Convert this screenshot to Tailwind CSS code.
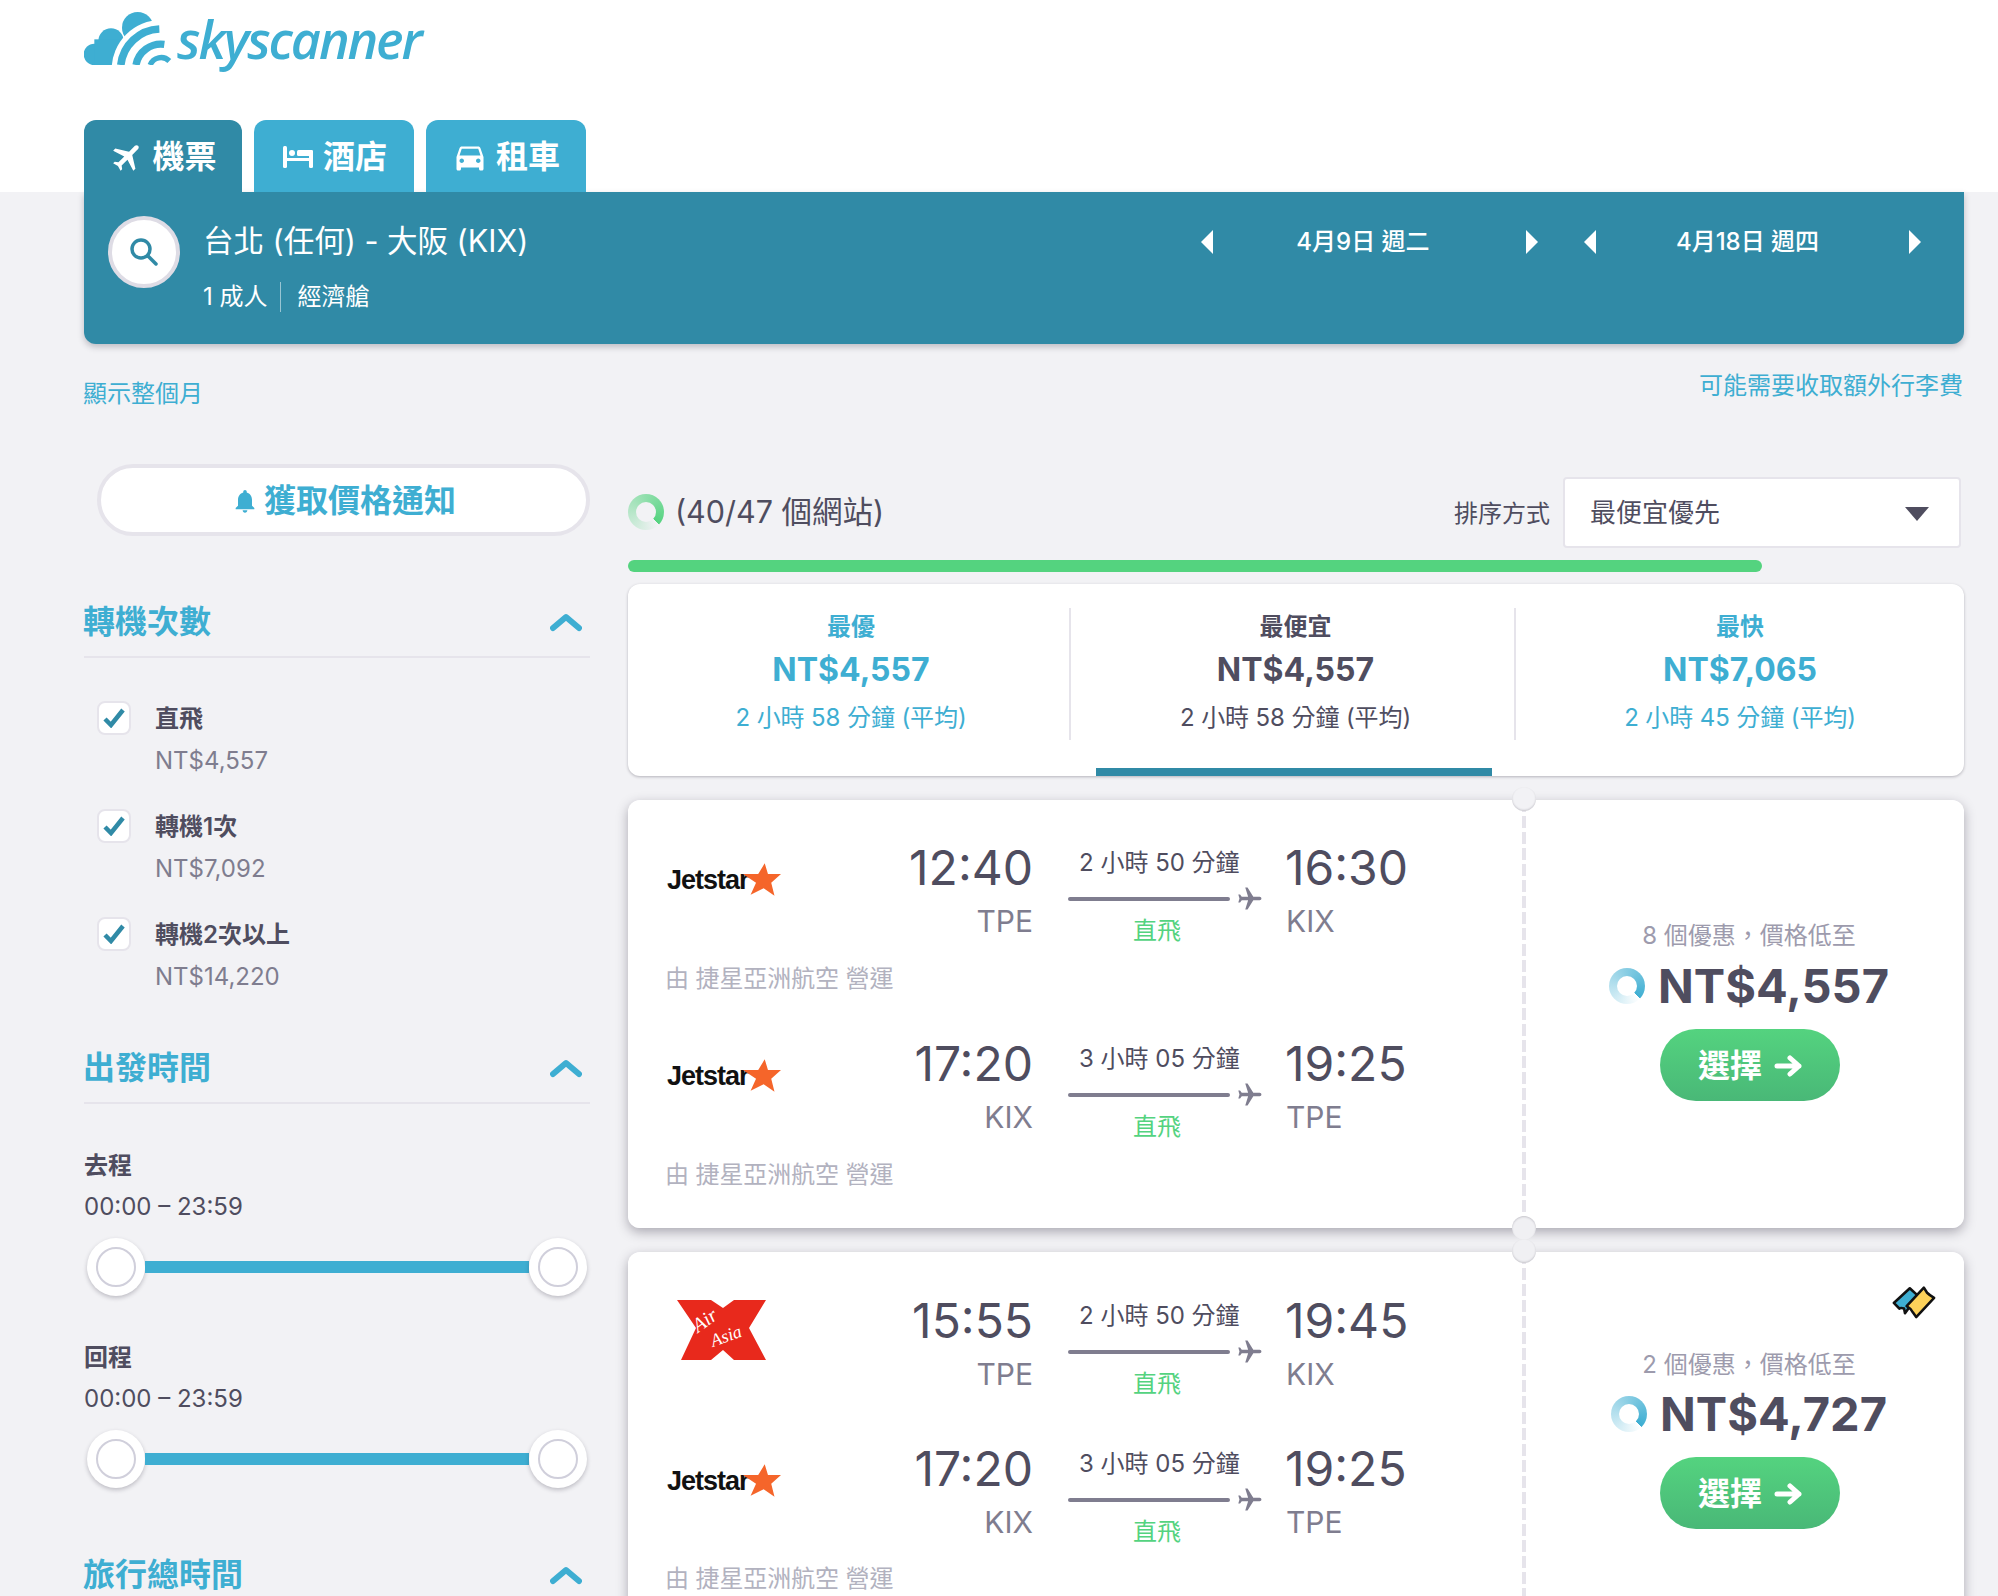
<!DOCTYPE html>
<html lang="zh-Hant">
<head>
<meta charset="UTF-8">
<title>Skyscanner</title>
<script src="https://cdn.jsdelivr.net/npm/@tailwindcss/browser@4"></script>
</head>
<body class="w-[1998px] h-[1596px] overflow-hidden bg-[#f2f2f5] text-[#4f4d5f] font-['Inter','Noto_Sans_CJK_TC',sans-serif]">

<!-- header -->
<header class="bg-white h-[192px] px-[84px]">
  <div class="h-[120px] pt-[11px] flex items-start gap-[3px]">
    <svg width="90" height="54" viewBox="24 15 270 162">
      <g fill="#3eaed2">
        <circle cx="55" cy="145" r="32"/><circle cx="105" cy="105" r="38"/><circle cx="185" cy="65" r="47"/>
        <rect x="55" y="100" width="130" height="77"/>
      </g>
      <circle cx="255" cy="190" r="148" fill="#fff"/>
      <g fill="none" stroke="#3eaed2">
        <path stroke-width="23" d="M134.5 177A121 121 0 0 1 250 69"/>
        <path stroke-width="22" d="M180 177A76 76 0 0 1 265 115"/>
        <path stroke-width="16" d="M222.5 177A35 35 0 0 1 280 165"/>
      </g>
    </svg>
    <span class="text-[#3eaed2] text-[52px] leading-[56px] italic font-semibold font-['Open_Sans',sans-serif] tracking-[-2.1px]">skyscanner</span>
  </div>
  <nav class="flex gap-[12px] h-[72px] text-white text-[32px] font-bold">
    <div class="w-[158px] pt-[2px] pl-[1px] rounded-t-[12px] bg-[#308aa6] flex items-center justify-center gap-[6px]">
      <svg class="w-[36px] h-[36px] rotate-45" viewBox="0 0 24 24" fill="#fff"><path d="M21 16v-2l-8-5V3.5c0-.83-.67-1.5-1.5-1.5S10 2.67 10 3.5V9l-8 5v2l8-2.5V19l-2 1.500V22l3.500-1 3.500 1v-1.500L13 19v-5.500l8 2.500z"/></svg>
      <span>機票</span>
    </div>
    <div class="w-[160px] pt-[2px] pl-[2px] rounded-t-[12px] bg-[#3eaed2] flex items-center justify-center gap-[10px]">
      <svg class="w-[30px] h-[24px]" viewBox="0 0 30 24" fill="#fff"><rect x="0" y="1" width="4" height="22" rx="1.5"/><circle cx="9" cy="8" r="3"/><rect x="14" y="5" width="16" height="6" rx="1.5"/><rect x="3" y="13" width="27" height="3"/><rect x="26" y="5" width="4" height="18" rx="1.5"/></svg>
      <span>酒店</span>
    </div>
    <div class="w-[160px] pt-[2px] rounded-t-[12px] bg-[#3eaed2] flex items-center justify-center gap-[8px]">
      <svg class="w-[36px] h-[36px]" viewBox="0 0 24 24" fill="#fff"><path d="M18.92 6.01C18.72 5.42 18.16 5 17.5 5h-11c-.66 0-1.21.42-1.42 1.01L3 12v8c0 .55.45 1 1 1h1c.55 0 1-.45 1-1v-1h12v1c0 .55.45 1 1 1h1c.55 0 1-.45 1-1v-8l-2.08-5.99zM6.5 16c-.83 0-1.5-.67-1.5-1.5S5.67 13 6.5 13s1.5.67 1.5 1.5S7.33 16 6.5 16zm11 0c-.83 0-1.5-.67-1.5-1.5s.67-1.5 1.5-1.5 1.5.67 1.5 1.5-.67 1.5-1.5 1.5zM5 11l1.5-4.5h11L19 11H5z"/></svg>
      <span>租車</span>
    </div>
  </nav>
</header>

<!-- search summary -->
<section class="ml-[84px] w-[1880px] h-[152px] rounded-b-[12px] bg-[#308aa6] shadow-[0_3px_6px_rgba(37,32,51,0.25)] text-white flex pl-[24px] pt-[24px]">
  <div class="w-[72px] h-[72px] rounded-full bg-white border-4 border-[#dedce5] flex items-center justify-center">
    <svg class="w-[34px] h-[34px]" viewBox="0 0 34 34" fill="none" stroke="#308aa6" stroke-width="3.5" stroke-linecap="round"><circle cx="14" cy="14" r="9"/><path d="M21 21l8 8"/></svg>
  </div>
  <div class="ml-[23px] w-[997px]">
    <div class="text-[30.5px] leading-[44px] mt-[3px]">台北 (任何) - 大阪 (KIX)</div>
    <div class="flex items-center mt-[19px] text-[24px] leading-[30px]">
      <span>1 成人</span>
      <span class="w-[1px] h-[30px] bg-white/50 ml-[12px] mr-[17px]"></span>
      <span>經濟艙</span>
    </div>
  </div>
  <div class="flex items-start text-[24px] leading-[52px] font-medium">
    <div class="w-[339px] flex items-center justify-between">
      <svg width="14" height="24" viewBox="0 0 14 24" fill="#fff"><path d="M13 0v24L1 12z"/></svg>
      <span class="pr-[13px]">4月9日 週二</span>
      <svg width="14" height="24" viewBox="0 0 14 24" fill="#fff"><path d="M1 0v24l12-12z"/></svg>
    </div>
    <div class="w-[339px] ml-[44px] flex items-center justify-between">
      <svg width="14" height="24" viewBox="0 0 14 24" fill="#fff"><path d="M13 0v24L1 12z"/></svg>
      <span class="pr-[10px]">4月18日 週四</span>
      <svg width="14" height="24" viewBox="0 0 14 24" fill="#fff"><path d="M1 0v24l12-12z"/></svg>
    </div>
  </div>
</section>

<div class="flex justify-between pl-[83px] pr-[35px] text-[24px] leading-[32px] text-[#3eaed2] pt-[26px] h-[120px]">
  <a class="mt-[8px]">顯示整個月</a>
  <a>可能需要收取額外行李費</a>
</div>

<div class="flex pl-[84px]">
  <!-- filters -->
  <aside class="w-[506px] shrink-0">
    <button class="ml-[13px] w-[493px] h-[72px] pt-[2px] rounded-full bg-white border-4 border-[#e6e4eb] flex items-center justify-center gap-[5px] text-[#3eaed2] text-[32px] font-bold">
      <svg class="w-[28px] h-[28px]" viewBox="0 0 24 24" fill="#3eaed2"><path d="M12 22c1.1 0 2-.9 2-2h-4c0 1.1.9 2 2 2zm6-6v-5c0-3.07-1.63-5.64-4.5-6.32V4c0-.83-.67-1.5-1.5-1.5s-1.500.67-1.5 1.500v.68C7.640 5.360 6 7.920 6 11v5l-2 2v1h16v-1l-2-2z"/></svg>
      <span>獲取價格通知</span>
    </button>

    <div class="mt-[52px] h-[70px] border-b-2 border-[#e6e4eb] flex items-center justify-between text-[#3eaed2] text-[32px] font-bold">
      <span class="-ml-[1px]">轉機次數</span>
      <svg class="mr-[8px]" width="32" height="20" viewBox="0 0 32 20" fill="none" stroke="#3eaed2" stroke-width="6" stroke-linecap="round" stroke-linejoin="round"><path d="M3 16L16 5l13 11"/></svg>
    </div>

    <div class="mt-[43px] flex items-start h-[108px] pl-[13px]">
      <div class="w-[34px] h-[34px] rounded-[8px] bg-white border-2 border-[#e6e4eb] flex items-center justify-center">
        <svg width="22" height="20" viewBox="0 0 22 20" fill="none" stroke="#308aa6" stroke-width="4.500"><path d="M2 11l6 6L20 2"/></svg>
      </div>
      <div class="ml-[24px] text-[24px] leading-[36px]">
        <div class="font-semibold">直飛</div>
        <div class="mt-[7px] leading-[34px] text-[#7f7d8f]">NT$4,557</div>
      </div>
    </div>
    <div class="flex items-start h-[108px] pl-[13px]">
      <div class="w-[34px] h-[34px] rounded-[8px] bg-white border-2 border-[#e6e4eb] flex items-center justify-center">
        <svg width="22" height="20" viewBox="0 0 22 20" fill="none" stroke="#308aa6" stroke-width="4.500"><path d="M2 11l6 6L20 2"/></svg>
      </div>
      <div class="ml-[24px] text-[24px] leading-[36px]">
        <div class="font-semibold">轉機1次</div>
        <div class="mt-[7px] leading-[34px] text-[#7f7d8f]">NT$7,092</div>
      </div>
    </div>
    <div class="flex items-start h-[108px] pl-[13px]">
      <div class="w-[34px] h-[34px] rounded-[8px] bg-white border-2 border-[#e6e4eb] flex items-center justify-center">
        <svg width="22" height="20" viewBox="0 0 22 20" fill="none" stroke="#308aa6" stroke-width="4.500"><path d="M2 11l6 6L20 2"/></svg>
      </div>
      <div class="ml-[24px] text-[24px] leading-[36px]">
        <div class="font-semibold">轉機2次以上</div>
        <div class="mt-[7px] leading-[34px] text-[#7f7d8f]">NT$14,220</div>
      </div>
    </div>

    <div class="mt-[9px] h-[70px] border-b-2 border-[#e6e4eb] flex items-center justify-between text-[#3eaed2] text-[32px] font-bold">
      <span class="-ml-[1px]">出發時間</span>
      <svg class="mr-[8px]" width="32" height="20" viewBox="0 0 32 20" fill="none" stroke="#3eaed2" stroke-width="6" stroke-linecap="round" stroke-linejoin="round"><path d="M3 16L16 5l13 11"/></svg>
    </div>

    <div class="mt-[42px] text-[24px] leading-[40px] font-semibold">去程</div>
    <div class="mt-[1px] text-[24px] leading-[40px]">00:00 – 23:59</div>
    <div class="mt-[11px] ml-[3px] w-[500px] h-[58px] flex items-center">
      <div class="w-[58px] h-[58px] rounded-full bg-white shadow-[0_2px_4px_rgba(37,32,51,0.25)] flex items-center justify-center"><div class="w-[40px] h-[40px] rounded-full border-2 border-[#d0cfdb]"></div></div>
      <div class="flex-1 h-[12px] bg-[#3eaed2]"></div>
      <div class="w-[58px] h-[58px] rounded-full bg-white shadow-[0_2px_4px_rgba(37,32,51,0.25)] flex items-center justify-center"><div class="w-[40px] h-[40px] rounded-full border-2 border-[#d0cfdb]"></div></div>
    </div>

    <div class="mt-[42px] text-[24px] leading-[40px] font-semibold">回程</div>
    <div class="mt-[1px] text-[24px] leading-[40px]">00:00 – 23:59</div>
    <div class="mt-[11px] ml-[3px] w-[500px] h-[58px] flex items-center">
      <div class="w-[58px] h-[58px] rounded-full bg-white shadow-[0_2px_4px_rgba(37,32,51,0.25)] flex items-center justify-center"><div class="w-[40px] h-[40px] rounded-full border-2 border-[#d0cfdb]"></div></div>
      <div class="flex-1 h-[12px] bg-[#3eaed2]"></div>
      <div class="w-[58px] h-[58px] rounded-full bg-white shadow-[0_2px_4px_rgba(37,32,51,0.25)] flex items-center justify-center"><div class="w-[40px] h-[40px] rounded-full border-2 border-[#d0cfdb]"></div></div>
    </div>

    <div class="mt-[52px] h-[70px] flex items-center justify-between text-[#3eaed2] text-[32px] font-bold">
      <span class="-ml-[1px]">旅行總時間</span>
      <svg class="mr-[8px]" width="32" height="20" viewBox="0 0 32 20" fill="none" stroke="#3eaed2" stroke-width="6" stroke-linecap="round" stroke-linejoin="round"><path d="M3 16L16 5l13 11"/></svg>
    </div>
  </aside>

  <!-- results -->
  <main class="ml-[38px] w-[1336px] shrink-0 pt-[13px]">
    <div class="flex items-center h-[70px] pr-[3px]">
      <div class="w-[36px] h-[36px] rounded-full bg-[conic-gradient(from_135deg,#ffffff00,#54d37f)] flex items-center justify-center"><div class="w-[20px] h-[20px] rounded-full bg-[#f2f2f5]"></div></div>
      <span class="ml-[11px] text-[30.5px] flex-1">(40/47 個網站)</span>
      <span class="pt-[3px] text-[24px] mr-[13px]">排序方式</span>
      <div class="w-[398px] h-[71px] bg-white border-2 border-[#e6e4eb] rounded-[4px] flex items-center justify-between pl-[25px] pr-[29px] text-[26px]">
        <span class="pt-[1px]">最便宜優先</span>
        <svg class="mt-[3px]" width="26" height="14" viewBox="0 0 26 14" fill="#4f4d5f"><path d="M1 0h24L13 14z"/></svg>
      </div>
    </div>
    <div class="mt-[13px] w-[1134px] h-[12px] rounded-full bg-[#54d37f]"></div>

    <!-- sort summary -->
    <div class="relative mt-[12px] h-[192px] rounded-[12px] bg-white shadow-[0_1px_3px_rgba(37,32,51,0.3)] grid grid-cols-[443px_445px_1fr] pt-[24px] text-center">
      <div class="h-[132px] pl-[5px] border-r-2 border-[#e6e4eb] text-[#3eaed2]">
        <div class="pt-[1px] text-[24px] leading-[36px] font-semibold">最優</div>
        <div class="pt-[1px] text-[32px] leading-[48px] font-bold">NT$4,557</div>
        <div class="text-[24px] leading-[36px] mt-[6px] tracking-[-0.1px]">2 小時 58 分鐘 (平均)</div>
      </div>
      <div class="h-[132px] pl-[6px] border-r-2 border-[#e6e4eb]">
        <div class="pt-[1px] text-[24px] leading-[36px] font-semibold">最便宜</div>
        <div class="pt-[1px] text-[32px] leading-[48px] font-bold">NT$4,557</div>
        <div class="text-[24px] leading-[36px] mt-[6px] tracking-[-0.1px]">2 小時 58 分鐘 (平均)</div>
      </div>
      <div class="h-[132px] text-[#3eaed2]">
        <div class="pt-[1px] text-[24px] leading-[36px] font-semibold">最快</div>
        <div class="pt-[1px] text-[32px] leading-[48px] font-bold">NT$7,065</div>
        <div class="text-[24px] leading-[36px] mt-[6px] tracking-[-0.1px]">2 小時 45 分鐘 (平均)</div>
      </div>
      <div class="absolute left-[468px] bottom-0 w-[396px] h-[8px] bg-[#308aa6]"></div>
    </div>

    <!-- itinerary 1 -->
    <div class="relative mt-[24px] h-[428px] rounded-[12px] shadow-[0_4px_12px_rgba(37,32,51,0.35)]">
    <article class="relative overflow-hidden h-full rounded-[12px] bg-white flex">
      <div class="w-[896px] pl-[37px] pt-[38px]">
        <div class="h-[196px]">
          <div class="flex items-start">
            <div class="w-[241px] mt-[25px] pl-[2px] flex items-center">
              <span class="text-[27px] leading-[32px] font-bold text-[#111] tracking-[-1px] font-['Liberation_Sans',sans-serif]">Jetstar</span>
              <svg class="-ml-[6px]" width="38" height="33" viewBox="0 0 35 30" fill="#f5652a"><path d="M20 0l3 10 12 0-9 8 3 12-10-7-12 6 5-11L0 10l14 0z"/></svg>
            </div>
            <div class="w-[127px] text-right">
              <div class="text-[48px] leading-[60px]">12:40</div>
              <div class="-mt-[1px] text-[30px] leading-[48px] text-[#7f7d8f]">TPE</div>
            </div>
            <div class="ml-[35px] w-[196px] pt-[7px] text-[24px] leading-[36px]">
              <div class="pl-[11px] whitespace-nowrap">2 小時 50 分鐘</div>
              <div class="mt-[6px] flex items-center h-[24px]">
                <div class="w-[164px] h-[4px] rounded-full bg-[#7f7d8f]"></div>
                <svg class="ml-[6px] w-[28px] h-[28px] rotate-90" viewBox="0 0 24 24" fill="#7f7d8f"><path d="M21 16v-2l-8-5V3.5c0-.83-.67-1.500-1.500-1.500S10 2.670 10 3.500V9l-8 5v2l8-2.500V19l-2 1.500V22l3.500-1 3.500 1v-1.500L13 19v-5.500l8 2.500z"/></svg>
              </div>
              <div class="mt-[2px] pl-[65px] text-[#54d37f]">直飛</div>
            </div>
            <div class="ml-[21px]">
              <div class="text-[48px] leading-[60px]">16:30</div>
              <div class="-mt-[1px] ml-[1px] text-[30px] leading-[48px] text-[#7f7d8f]">KIX</div>
            </div>
          </div>
          <div class="mt-[12px] text-[24px] leading-[36px] text-[#b2b2bf] tracking-[-0.1px]">由 捷星亞洲航空 營運</div>
        </div>
        <div class="h-[196px]">
          <div class="flex items-start">
            <div class="w-[241px] mt-[25px] pl-[2px] flex items-center">
              <span class="text-[27px] leading-[32px] font-bold text-[#111] tracking-[-1px] font-['Liberation_Sans',sans-serif]">Jetstar</span>
              <svg class="-ml-[6px]" width="38" height="33" viewBox="0 0 35 30" fill="#f5652a"><path d="M20 0l3 10 12 0-9 8 3 12-10-7-12 6 5-11L0 10l14 0z"/></svg>
            </div>
            <div class="w-[127px] text-right">
              <div class="text-[48px] leading-[60px]">17:20</div>
              <div class="-mt-[1px] text-[30px] leading-[48px] text-[#7f7d8f]">KIX</div>
            </div>
            <div class="ml-[35px] w-[196px] pt-[7px] text-[24px] leading-[36px]">
              <div class="pl-[11px] whitespace-nowrap">3 小時 05 分鐘</div>
              <div class="mt-[6px] flex items-center h-[24px]">
                <div class="w-[164px] h-[4px] rounded-full bg-[#7f7d8f]"></div>
                <svg class="ml-[6px] w-[28px] h-[28px] rotate-90" viewBox="0 0 24 24" fill="#7f7d8f"><path d="M21 16v-2l-8-5V3.5c0-.83-.67-1.500-1.500-1.500S10 2.670 10 3.500V9l-8 5v2l8-2.500V19l-2 1.500V22l3.500-1 3.500 1v-1.500L13 19v-5.500l8 2.500z"/></svg>
              </div>
              <div class="mt-[2px] pl-[65px] text-[#54d37f]">直飛</div>
            </div>
            <div class="ml-[21px]">
              <div class="text-[48px] leading-[60px]">19:25</div>
              <div class="-mt-[1px] ml-[1px] text-[30px] leading-[48px] text-[#7f7d8f]">TPE</div>
            </div>
          </div>
          <div class="mt-[12px] text-[24px] leading-[36px] text-[#b2b2bf] tracking-[-0.1px]">由 捷星亞洲航空 營運</div>
        </div>
      </div>
      <div class="flex-1 pl-[10px] pt-[118px] flex flex-col items-center">
        <div class="text-[24px] leading-[36px] text-[#9d9bad]">8 個優惠&#xFF0C;價格低至</div>
        <div class="mt-[4px] flex items-center h-[56px] gap-[13px]">
          <div class="w-[36px] h-[36px] rounded-full bg-[conic-gradient(from_135deg,#ffffff00,#3eaed2)] flex items-center justify-center"><div class="w-[20px] h-[20px] rounded-full bg-white"></div></div>
          <span class="text-[47px] font-bold">NT$4,557</span>
        </div>
        <button class="mt-[15px] ml-[2px] w-[180px] h-[72px] pt-[1px] rounded-full bg-gradient-to-b from-[#54d37f] to-[#49b877] text-white text-[32px] font-bold flex items-center justify-center gap-[12px]">
          <span>選擇</span>
          <svg width="28" height="22" viewBox="0 0 28 22" fill="none" stroke="#fff" stroke-width="5" stroke-linecap="round" stroke-linejoin="round"><path d="M3 11h22M16 3l9 8-9 8"/></svg>
        </button>
      </div>
      <div class="absolute left-[894px] top-0 bottom-0 w-[4px] bg-[repeating-linear-gradient(to_bottom,#e6e4eb_0,#e6e4eb_12px,transparent_12px,transparent_16px)]"></div>
    </article>
    <div class="absolute left-[884px] -top-[13px] w-[24px] h-[24px] rounded-full bg-[#f2f2f5] shadow-[inset_0_-1px_2px_rgba(37,32,51,0.2)]"></div>
    <div class="absolute left-[884px] -bottom-[12px] w-[24px] h-[24px] rounded-full bg-[#f0f0f3] shadow-[inset_0_1px_2px_rgba(37,32,51,0.2)]"></div>
    </div>

    <!-- itinerary 2 -->
    <div class="relative mt-[24px] h-[420px] rounded-[12px] shadow-[0_4px_12px_rgba(37,32,51,0.35)]">
    <article class="relative overflow-hidden h-full rounded-[12px] bg-white flex">
      <div class="w-[896px] pl-[37px] pt-[39px]">
        <div class="flex items-start">
          <div class="w-[241px] mt-[9px]">
            <svg class="ml-[12px]" width="90" height="60" viewBox="0 0 90 60"><path fill="#e8291c" d="M0 0h34l12 8 11-8h32L72 28l17 32H57l-11-10-12 10H4l15-32z"/><g fill="#fff" font-family="Liberation Serif, serif" font-style="italic"><text x="21" y="33" font-size="20" transform="rotate(-35 21 33)">Air</text><text x="36" y="47" font-size="18" transform="rotate(-20 36 47)">Asia</text></g></svg>
          </div>
          <div class="w-[127px] text-right">
            <div class="text-[48px] leading-[60px]">15:55</div>
            <div class="-mt-[1px] text-[30px] leading-[48px] text-[#7f7d8f]">TPE</div>
          </div>
          <div class="ml-[35px] w-[196px] pt-[7px] text-[24px] leading-[36px]">
            <div class="pl-[11px] whitespace-nowrap">2 小時 50 分鐘</div>
            <div class="mt-[6px] flex items-center h-[24px]">
              <div class="w-[164px] h-[4px] rounded-full bg-[#7f7d8f]"></div>
              <svg class="ml-[6px] w-[28px] h-[28px] rotate-90" viewBox="0 0 24 24" fill="#7f7d8f"><path d="M21 16v-2l-8-5V3.5c0-.83-.67-1.500-1.500-1.500S10 2.670 10 3.500V9l-8 5v2l8-2.500V19l-2 1.500V22l3.500-1 3.500 1v-1.500L13 19v-5.500l8 2.500z"/></svg>
            </div>
            <div class="mt-[2px] pl-[65px] text-[#54d37f]">直飛</div>
          </div>
          <div class="ml-[21px]">
            <div class="text-[48px] leading-[60px]">19:45</div>
            <div class="-mt-[1px] ml-[1px] text-[30px] leading-[48px] text-[#7f7d8f]">KIX</div>
          </div>
        </div>
        <div class="mt-[37px] flex items-start">
          <div class="w-[241px] mt-[25px] pl-[2px] flex items-center">
            <span class="text-[27px] leading-[32px] font-bold text-[#111] tracking-[-1px] font-['Liberation_Sans',sans-serif]">Jetstar</span>
            <svg class="-ml-[6px]" width="38" height="33" viewBox="0 0 35 30" fill="#f5652a"><path d="M20 0l3 10 12 0-9 8 3 12-10-7-12 6 5-11L0 10l14 0z"/></svg>
          </div>
          <div class="w-[127px] text-right">
            <div class="text-[48px] leading-[60px]">17:20</div>
            <div class="-mt-[1px] text-[30px] leading-[48px] text-[#7f7d8f]">KIX</div>
          </div>
          <div class="ml-[35px] w-[196px] pt-[7px] text-[24px] leading-[36px]">
            <div class="pl-[11px] whitespace-nowrap">3 小時 05 分鐘</div>
            <div class="mt-[6px] flex items-center h-[24px]">
              <div class="w-[164px] h-[4px] rounded-full bg-[#7f7d8f]"></div>
              <svg class="ml-[6px] w-[28px] h-[28px] rotate-90" viewBox="0 0 24 24" fill="#7f7d8f"><path d="M21 16v-2l-8-5V3.5c0-.83-.67-1.500-1.500-1.500S10 2.670 10 3.500V9l-8 5v2l8-2.500V19l-2 1.500V22l3.500-1 3.500 1v-1.500L13 19v-5.500l8 2.500z"/></svg>
            </div>
            <div class="mt-[2px] pl-[65px] text-[#54d37f]">直飛</div>
          </div>
          <div class="ml-[21px]">
            <div class="text-[48px] leading-[60px]">19:25</div>
            <div class="-mt-[1px] ml-[1px] text-[30px] leading-[48px] text-[#7f7d8f]">TPE</div>
          </div>
        </div>
        <div class="mt-[11px] text-[24px] leading-[36px] text-[#b2b2bf] tracking-[-0.1px]">由 捷星亞洲航空 營運</div>
      </div>
      <div class="flex-1 pl-[10px] pt-[95px] flex flex-col items-center">
        <div class="text-[24px] leading-[36px] text-[#9d9bad]">2 個優惠&#xFF0C;價格低至</div>
        <div class="mt-[3px] flex items-center h-[56px] gap-[13px]">
          <div class="w-[36px] h-[36px] rounded-full bg-[conic-gradient(from_135deg,#ffffff00,#3eaed2)] flex items-center justify-center"><div class="w-[20px] h-[20px] rounded-full bg-white"></div></div>
          <span class="text-[47px] font-bold">NT$4,727</span>
        </div>
        <button class="mt-[15px] ml-[2px] w-[180px] h-[72px] pt-[1px] rounded-full bg-gradient-to-b from-[#54d37f] to-[#49b877] text-white text-[32px] font-bold flex items-center justify-center gap-[12px]">
          <span>選擇</span>
          <svg width="28" height="22" viewBox="0 0 28 22" fill="none" stroke="#fff" stroke-width="5" stroke-linecap="round" stroke-linejoin="round"><path d="M3 11h22M16 3l9 8-9 8"/></svg>
        </button>
      </div>
      <svg class="absolute left-[1256px] top-[26px]" width="58" height="48" viewBox="0 0 180 150" stroke="#111" stroke-width="8" stroke-linejoin="round"><path fill="#3eaed2" d="M30 78L80 32l25 23-40 55-3-15q-12-3-14 1z"/><path fill="#fdd25a" d="M70 88l54-58 10 16q8 8 22 16l-56 60-10-14q-8-14-20-20z"/></svg>
      <div class="absolute left-[894px] top-0 bottom-0 w-[4px] bg-[repeating-linear-gradient(to_bottom,#e6e4eb_0,#e6e4eb_12px,transparent_12px,transparent_16px)]"></div>
    </article>
    <div class="absolute left-[884px] -top-[13px] w-[24px] h-[24px] rounded-full bg-[#f0f0f3] shadow-[inset_0_-1px_2px_rgba(37,32,51,0.2)]"></div>
    </div>
  </main>
</div>
</body>
</html>
